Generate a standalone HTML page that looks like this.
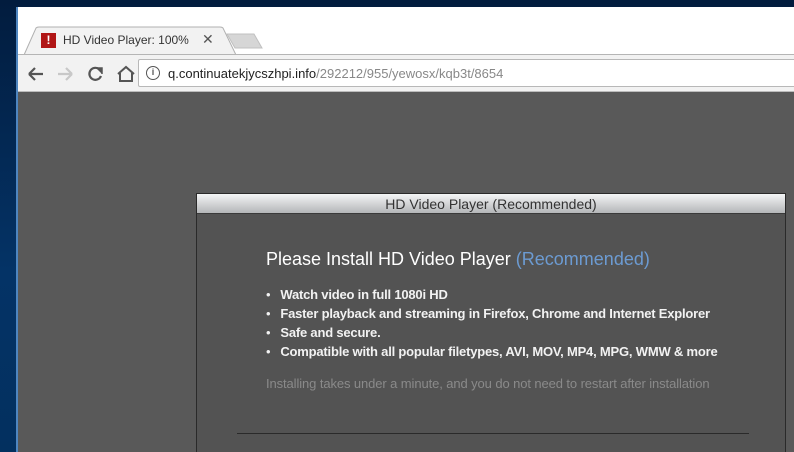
<!DOCTYPE html>
<html><head><style>
*{margin:0;padding:0;box-sizing:border-box}
html,body{width:794px;height:452px;overflow:hidden}
body{position:relative;background:#0a2a55;font-family:"Liberation Sans",Arial,sans-serif}
.desk{position:absolute;inset:0;background:linear-gradient(180deg,#021c3e 0%,#043366 60%,#03305f 100%)}
.win{position:absolute;left:16px;top:7px;right:0;bottom:0;background:#fff;border-left:2px solid #4f86c0;overflow:hidden}
.tabstrip{position:absolute;left:0;top:0;right:0;height:47px;background:#fff}
.tab{position:absolute;left:6px;top:20px;width:216px;height:28px}
.tool{position:absolute;left:0;top:47px;right:0;height:37px;background:#f2f2f2;border-top:1px solid #b5b5b5}
.addr{position:absolute;left:120px;top:4px;right:-4px;height:28px;background:#fff;border:1px solid #b8b8b8;border-radius:2px}
.page{position:absolute;left:0;top:84px;right:0;bottom:0;background:#595959;border-top:1px solid #bcbcbc;overflow:hidden}
.dlg{position:absolute;left:178px;top:101px;width:590px;height:259px;border:1px solid #2a2a2a;border-bottom:none;background:#535353}
.dt{height:20px;background:linear-gradient(#f4f5f6,#b4b6b8);border-bottom:1px solid #3a3a3a;text-align:center;font-size:14px;color:#333;line-height:20px}
h1{position:absolute;left:69px;top:55px;font-size:18px;font-weight:normal;color:#fff;white-space:nowrap}
h1 span{color:#6c9bd2}
ul{position:absolute;left:69px;top:91px;list-style:none;font-size:13px;color:#f2f2f2;font-weight:bold;line-height:19px;white-space:nowrap;letter-spacing:-0.2px}
ul li:before{content:"•";margin-right:10px;font-weight:normal}
.note{position:absolute;left:69px;top:182px;font-size:13px;color:#8a8a8a;white-space:nowrap;letter-spacing:-0.1px}
.sep{position:absolute;left:40px;top:239px;width:512px;height:1px;background:#2a2a2a}
</style></head><body>
<div class="desk"></div>
<div class="win">
 <div class="tabstrip">
  <svg class="tab" viewBox="0 0 216 28" width="216" height="28" style="overflow:visible"><path d="M0 28 L12 1 Q13 0 15 0 L196 0 Q198 0 199 1 L212 28" fill="#f2f2f2" stroke="#b0b0b0"/></svg>
  <div style="position:absolute;left:23px;top:26px;width:15px;height:15px;background:#b11616;color:#fff;font-weight:bold;font-size:12px;text-align:center;line-height:15px">!</div>
  <div style="position:absolute;left:45px;top:26px;font-size:12px;color:#333;white-space:nowrap;width:130px;overflow:hidden">HD Video Player: 100% F</div>
  <div style="position:absolute;left:184px;top:24px;font-size:14px;color:#555">✕</div>
  <svg style="position:absolute;left:208px;top:26px" width="40" height="16"><path d="M1 1 L28 1 L36 15 L9 15 Z" fill="#d6d6d6" stroke="#c0c0c0"/></svg>
 </div>
 <div class="tool">
  <svg style="position:absolute;left:8px;top:10px" width="110" height="18" fill="none" stroke-width="2.2">
   <path d="M3 9 H17 M3 9 L9 3 M3 9 L9 15" stroke="#555"/>
   <path d="M46 9 H32 M46 9 L40 3 M46 9 L40 15" stroke="#c8c8c8"/>
   <path d="M73 4 A6 6 0 1 0 75 11" stroke="#555"/><path d="M70 3 L76 3 L76 9" stroke="#555" fill="#555" stroke-width="1.5"/>
   <path d="M92 9 L100 2 L108 9 M94 8 V16 H106 V8" stroke="#555" stroke-width="2"/>
  </svg>
  <div class="addr">
   <div style="position:absolute;left:7px;top:6px;width:14px;height:14px;border:1.5px solid #555;border-radius:50%;font-size:9px;font-weight:bold;color:#555;text-align:center;line-height:11px">i</div>
   <div style="position:absolute;left:29px;top:6px;font-size:13px;color:#222;white-space:nowrap">q.continuatekjycszhpi.info<span style="color:#888">/292212/955/yewosx/kqb3t/8654</span></div>
  </div>
 </div>
 <div class="page">
  <div class="dlg">
   <div class="dt">HD Video Player (Recommended)</div>
   <h1>Please Install HD Video Player <span>(Recommended)</span></h1>
   <ul><li>Watch video in full 1080i HD</li><li>Faster playback and streaming in Firefox, Chrome and Internet Explorer</li><li>Safe and secure.</li><li>Compatible with all popular filetypes, AVI, MOV, MP4, MPG, WMW &amp; more</li></ul>
   <div class="note">Installing takes under a minute, and you do not need to restart after installation</div>
   <div class="sep"></div>
  </div>
 </div>
</div>
</body></html>
